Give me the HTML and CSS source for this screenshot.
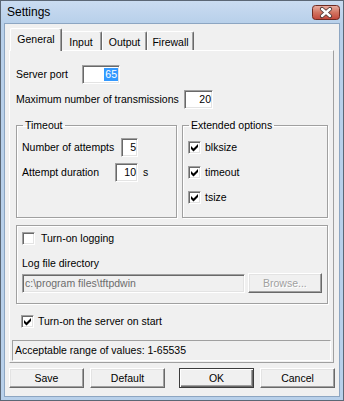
FILE: index.html
```html
<!DOCTYPE html>
<html lang="en">
<head>
  <meta charset="UTF-8" />
  <title>Settings</title>
  <link rel="stylesheet" href="styles.css">
</head>
<body>

  <div class="window">
    <div class="titlebar">
      <span class="title">Settings</span>
      <svg class="close" width="28" height="15" viewBox="0 0 28 15">
        <defs>
          <linearGradient id="closeFill" x1="0" y1="0" x2="0" y2="1">
            <stop offset="0" stop-color="#eab0a4"/>
            <stop offset="0.5" stop-color="#d27461"/>
            <stop offset="1" stop-color="#c2463a"/>
          </linearGradient>
        </defs>
        <rect x="0.5" y="0.5" width="27" height="14" rx="3" fill="url(#closeFill)" stroke="#6e2b22"/>
        <path d="M10 4 L18 11 M18 4 L10 11" stroke="#4e3a38" stroke-width="4.2" stroke-linecap="round"/>
        <path d="M10 4 L18 11 M18 4 L10 11" stroke="#fff" stroke-width="2.4" stroke-linecap="round"/>
      </svg>
    </div>

    <div class="client">
      <!-- Tab headers -->
      <div class="tabs">
        <div class="tab active tab-general">General</div>
        <div class="tab tab-input">Input</div>
        <div class="tab tab-output">Output</div>
        <div class="tab tab-firewall">Firewall</div>
      </div>

      <div class="panel">
        <div class="row">
          <span class="label port-label">Server port</span>
          <div class="edit port-edit"><span class="selected">65</span></div>
        </div>
        <div class="row row-max">
          <span class="label max-label">Maximum number of transmissions</span>
          <div class="edit max-edit">20</div>
        </div>

        <div class="groups">
          <fieldset class="group timeout">
            <legend>Timeout</legend>
            <div class="row">
              <span class="label attempts-label">Number of attempts</span>
              <div class="edit attempts-edit">5</div>
            </div>
            <div class="row">
              <span class="label duration-label">Attempt duration</span>
              <div class="edit duration-edit">10</div>
              <span class="unit">s</span>
            </div>
          </fieldset>

          <fieldset class="group extended">
            <legend>Extended options</legend>
            <div class="row">
              <span class="check"><svg width="9" height="9" viewBox="0 0 9 9"><path d="M1 3 L3.5 5.5 L8 1 L8 4 L3.5 8.5 L1 6 Z"/></svg></span>
              <span>blksize</span>
            </div>
            <div class="row">
              <span class="check"><svg width="9" height="9" viewBox="0 0 9 9"><path d="M1 3 L3.5 5.5 L8 1 L8 4 L3.5 8.5 L1 6 Z"/></svg></span>
              <span>timeout</span>
            </div>
            <div class="row">
              <span class="check"><svg width="9" height="9" viewBox="0 0 9 9"><path d="M1 3 L3.5 5.5 L8 1 L8 4 L3.5 8.5 L1 6 Z"/></svg></span>
              <span>tsize</span>
            </div>
          </fieldset>
        </div>

        <div class="logbox">
          <div class="check-row log-check">
            <span class="check"></span>
            <span>Turn-on logging</span>
          </div>
          <div class="log-label">Log file directory</div>
          <div class="log-row">
            <div class="edit disabled log-edit">c:\program files\tftpdwin</div>
            <div class="button disabled browse">Browse...</div>
          </div>
        </div>

        <div class="check-row start-row">
          <span class="check"><svg width="9" height="9" viewBox="0 0 9 9"><path d="M1 3 L3.5 5.5 L8 1 L8 4 L3.5 8.5 L1 6 Z"/></svg></span>
          <span>Turn-on the server on start</span>
        </div>

        <div class="status">Acceptable range of values: 1-65535</div>
      </div>

      <div class="buttons">
        <div class="button">Save</div>
        <div class="button btn-default">Default</div>
        <div class="button btn-ok">OK</div>
        <div class="button btn-cancel">Cancel</div>
      </div>
    </div>
  </div>

</body>
</html>
```

FILE: styles.css
```css
* {
  box-sizing: border-box;
}

body {
  margin: 0;
  font-family: "Liberation Sans", Arial, sans-serif;
  font-size: 10.5px;
  line-height: 13px;
  color: #000;
  background: #fff;
  white-space: nowrap;
}

.window {
  width: 344px;
  height: 401px;
  border: 1px solid #5b6775;
  background: #b8d0ea;
  display: flex;
  flex-direction: column;
}

.titlebar {
  height: 22px;
  display: flex;
  align-items: center;
  justify-content: space-between;
  padding: 0 3px 0 6px;
  background: linear-gradient(#cadcf1, #b8d0ea);
}

.title {
  font-size: 12px;
}

.close {
  display: block;
}

.client {
  flex: 1;
  margin: 0 3px 3px;
  padding: 4px 0 0 4px;
  background: #f0f0f0;
  border: 1px solid #8da6c2;
}

/* Tabs */
.tabs {
  display: flex;
  align-items: flex-end;
  height: 22px;
  padding-left: 3px;
}

.tab {
  height: 19px;
  padding-top: 4px;
  text-align: center;
  border-top: 1px solid #fff;
  border-left: 1px solid #fff;
  border-right: 1px solid #696969;
  box-shadow: inset -1px 0 0 #a0a0a0;
  border-radius: 2px 2px 0 0;
}

.tab.active {
  height: 23px;
  padding-top: 4px;
  margin: 0 -2px -1px;
  position: relative;
  z-index: 1;
  background: #f0f0f0;
}

.tab-general { width: 48px; }
.tab-general.active { width: 52px; }
.tab-input { width: 42px; }
.tab-output { width: 45px; }
.tab-firewall { width: 47px; }

.panel {
  width: 325px;
  height: 313px;
  padding: 14px 5px 1px 6px;
  border: 1px solid;
  border-color: #fff #a0a0a0 #a0a0a0 #fff;
}

.row {
  display: flex;
  align-items: center;
  height: 19px;
}

.row-max {
  margin-top: 6px;
}

.label {
  flex: none;
}

.port-label { width: 66px; }
.port-edit { width: 38px; }
.max-label { width: 168px; }
.max-edit { width: 29px; }
.attempts-label { width: 99px; }
.attempts-edit { width: 17px; }
.duration-label { width: 93px; }
.duration-edit { width: 23px; }

.unit {
  margin-left: 5px;
}

/* Sunken edit box */
.edit {
  height: 19px;
  display: flex;
  align-items: center;
  justify-content: flex-end;
  padding: 0 1px;
  background: #fff;
  border: 1px solid;
  border-color: #a0a0a0 #fff #fff #a0a0a0;
  box-shadow: inset 1px 1px 0 #696969, inset -1px -1px 0 #e3e3e3;
}

.selected {
  background: #3399ff;
  color: #fff;
  padding: 0 1px;
}

.edit.disabled {
  background: #f0f0f0;
  color: #6d6d6d;
  justify-content: flex-start;
  padding-left: 2px;
}

/* Group boxes */
.groups {
  display: flex;
  gap: 5px;
  margin-top: 10px;
}

.group {
  margin: 0;
  padding: 6px 5px 10px;
  min-width: 0;
  border: 1px solid #a0a0a0;
  box-shadow: inset 1px 1px 0 #fff, 1px 1px 0 #fff;
}

.group legend {
  margin-left: 1px;
  padding: 0 2px;
  line-height: 13px;
}

.group .row + .row {
  margin-top: 6px;
}

.timeout {
  width: 161px;
}

.extended {
  width: 146px;
}

.check {
  flex: none;
  width: 13px;
  height: 13px;
  display: flex;
  align-items: center;
  justify-content: center;
  margin-right: 4px;
  background: #fff;
  border: 1px solid;
  border-color: #a0a0a0 #fff #fff #a0a0a0;
  box-shadow: inset 1px 1px 0 #696969, inset -1px -1px 0 #e3e3e3;
}

.check svg {
  display: block;
  fill: #000;
}

.check-row {
  display: flex;
  align-items: center;
  height: 13px;
}

.logbox {
  margin-top: 7px;
  height: 79px;
  padding: 6px 5px 0;
  border: 1px solid #a0a0a0;
  box-shadow: inset 1px 1px 0 #fff, 1px 1px 0 #fff;
}

.log-check .check {
  margin-right: 6px;
}

.log-label {
  margin-top: 12px;
}

.log-row {
  display: flex;
  align-items: center;
  gap: 3px;
  height: 22px;
  margin-top: 2px;
}

.log-edit {
  width: 225px;
}

.browse {
  width: 73px;
  height: 22px;
}

.start-row {
  margin: 11px 0 0 5px;
}

.status {
  height: 21px;
  margin: 12px -3px 0 -4px;
  padding-left: 2px;
  display: flex;
  align-items: center;
  border: 1px solid;
  border-color: #a0a0a0 #fff #fff #a0a0a0;
}

/* Push buttons */
.buttons {
  display: flex;
  margin-top: 5px;
}

.button {
  width: 75px;
  height: 20px;
  display: flex;
  align-items: center;
  justify-content: center;
  border: 1px solid;
  border-color: #fff #696969 #696969 #fff;
  box-shadow: inset -1px -1px 0 #a0a0a0, inset 1px 1px 0 #e3e3e3;
}

.button.disabled {
  color: #a0a0a0;
  text-shadow: 1px 1px 0 #fff;
}

.btn-default { margin-left: 6px; }
.btn-ok {
  margin-left: 14px;
  border-color: #3c3c3c;
  box-shadow: inset 1px 1px 0 #fff, inset -1px -1px 0 #696969, inset -2px -2px 0 #a0a0a0;
}
.btn-cancel { margin-left: 6px; }
```
